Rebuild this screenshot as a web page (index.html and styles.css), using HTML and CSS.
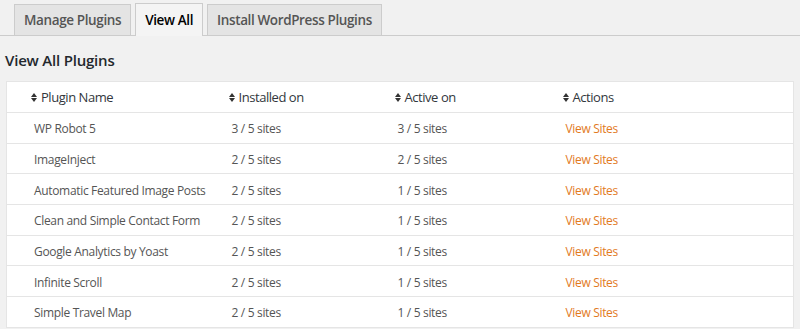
FILE: index.html
```html
<!DOCTYPE html>
<html lang="en">
<head>
    <meta charset="UTF-8">
    <title>View All Plugins</title>
    <link rel="stylesheet" href="styles.css">
</head>
<body>
    <div class="nav-tabs">
        <a class="nav-tab" href="#">Manage Plugins</a>
        <a class="nav-tab active" href="#">View All</a>
        <a class="nav-tab" href="#">Install WordPress Plugins</a>
    </div>

    <h2 class="page-title">View All Plugins</h2>

    <table class="plugins">
        <colgroup>
            <col class="c1"><col class="c2"><col class="c3"><col>
        </colgroup>
        <thead>
            <tr>
                <th><span class="sort"></span>Plugin Name</th>
                <th><span class="sort"></span>Installed on</th>
                <th><span class="sort"></span>Active on</th>
                <th><span class="sort"></span>Actions</th>
            </tr>
        </thead>
        <tbody>
            <tr><td>WP Robot 5</td><td>3 / 5 sites</td><td>3 / 5 sites</td><td><a href="#">View Sites</a></td></tr>
            <tr><td>ImageInject</td><td>2 / 5 sites</td><td>2 / 5 sites</td><td><a href="#">View Sites</a></td></tr>
            <tr><td>Automatic Featured Image Posts</td><td>2 / 5 sites</td><td>1 / 5 sites</td><td><a href="#">View Sites</a></td></tr>
            <tr><td>Clean and Simple Contact Form</td><td>2 / 5 sites</td><td>1 / 5 sites</td><td><a href="#">View Sites</a></td></tr>
            <tr><td>Google Analytics by Yoast</td><td>2 / 5 sites</td><td>1 / 5 sites</td><td><a href="#">View Sites</a></td></tr>
            <tr><td>Infinite Scroll</td><td>2 / 5 sites</td><td>1 / 5 sites</td><td><a href="#">View Sites</a></td></tr>
            <tr><td>Simple Travel Map</td><td>2 / 5 sites</td><td>1 / 5 sites</td><td><a href="#">View Sites</a></td></tr>
        </tbody>
    </table>
</body>
</html>
```

FILE: styles.css
```css
body {
    margin: 0;
    background: #f1f1f1;
    font-family: "Open Sans", "Liberation Sans", sans-serif;
    color: #444;
    overflow: hidden;
}

/* Tabs */
.nav-tabs {
    display: flex;
    align-items: flex-end;
    padding: 0 0 0 10px;
    border-bottom: 1px solid #ccc;
    height: 36px;
    box-sizing: border-box;
}

.nav-tab {
    display: block;
    margin-left: 4px;
    padding: 0 9px;
    height: 31px;
    line-height: 31px;
    box-sizing: border-box;
    background: #e4e4e4;
    border: 1px solid #ccc;
    border-bottom: none;
    font-size: 13.5px;
    letter-spacing: -0.38px;
    font-weight: 600;
    color: #555;
    text-decoration: none;
}

.nav-tab.active {
    height: 33px;
    line-height: 33px;
    margin-bottom: -1px;
    background: #f4f4f4;
    color: #000;
}

.page-title {
    margin: 14px 0 0 5px;
    font-size: 15px;
    font-weight: 600;
    letter-spacing: -0.2px;
    line-height: 20px;
    color: #23282d;
}

/* Table */
.plugins {
    margin: 11px 0 0 6px;
    width: 788px;
    table-layout: fixed;
    border-collapse: collapse;
    background: #fff;
    border: 1px solid #e5e5e5;
}

.plugins .c1 { width: 198px; }
.plugins .c2 { width: 166px; }
.plugins .c3 { width: 168px; }

.plugins th,
.plugins td {
    padding: 0 0 0 27px;
    text-align: left;
    border-bottom: 1px solid #e5e5e5;
    white-space: nowrap;
    box-sizing: border-box;
}

.plugins th {
    padding-left: 24px;
    height: 31px;
    font-size: 13px;
    letter-spacing: -0.45px;
    font-weight: 400;
    color: #32373c;
}

.plugins td {
    height: 30.7px;
    padding-top: 2px;
    font-size: 12px;
    letter-spacing: -0.33px;
    color: #555;
}

.plugins a {
    color: #e27a1e;
    text-decoration: none;
}

.sort {
    display: inline-block;
    width: 0;
    height: 0;
    margin-right: 4px;
    position: relative;
    top: -5px;
    border-left: 3px solid transparent;
    border-right: 3px solid transparent;
    border-bottom: 4px solid #333;
}

.sort::after {
    content: "";
    position: absolute;
    left: -3px;
    top: 5px;
    border-left: 3px solid transparent;
    border-right: 3px solid transparent;
    border-top: 4px solid #333;
}
```
